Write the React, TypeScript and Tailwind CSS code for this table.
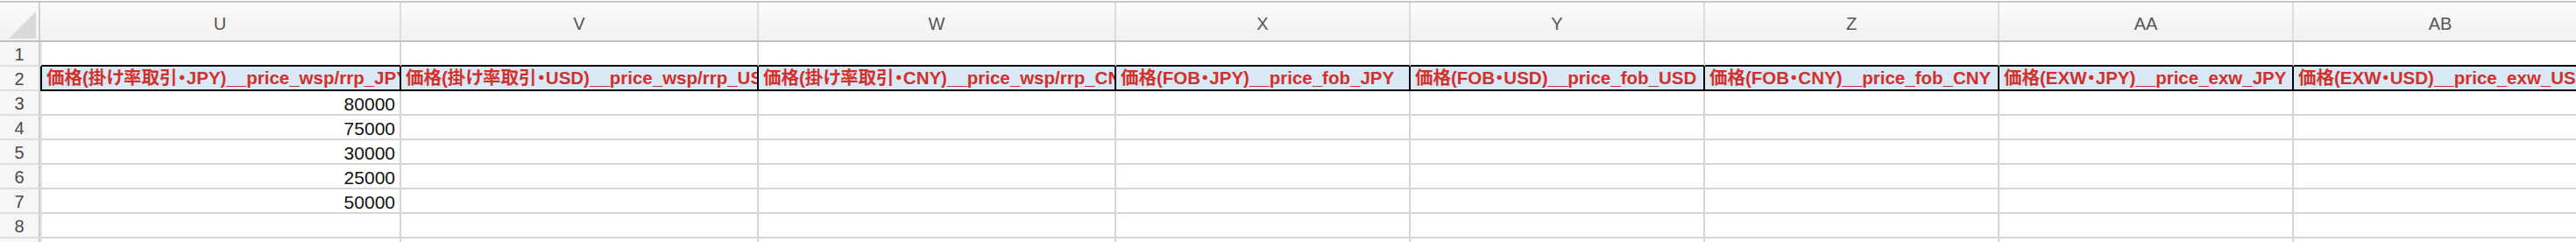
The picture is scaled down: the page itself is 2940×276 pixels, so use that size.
const font = "font-['Liberation_Sans','Noto_Sans_CJK_JP',sans-serif]"

const columns = [
    { key: "U", width: "w-[412px]", title: "価格(掛け率取引・JPY)__price_wsp/rrp_JPY" },
    { key: "V", width: "w-[408px]", title: "価格(掛け率取引・USD)__price_wsp/rrp_USD" },
    { key: "W", width: "w-[408px]", title: "価格(掛け率取引・CNY)__price_wsp/rrp_CNY" },
    { key: "X", width: "w-[336px]", title: "価格(FOB・JPY)__price_fob_JPY" },
    { key: "Y", width: "w-[336px]", title: "価格(FOB・USD)__price_fob_USD" },
    { key: "Z", width: "w-[336px]", title: "価格(FOB・CNY)__price_fob_CNY" },
    { key: "AA", width: "w-[336px]", title: "価格(EXW・JPY)__price_exw_JPY" },
    { key: "AB", width: "w-[336px]", title: "価格(EXW・USD)__price_exw_USD" },
]

const prices: Record<number, string> = { 3: "80000", 4: "75000", 5: "30000", 6: "25000", 7: "50000" }

const rows = [1, 2, 3, 4, 5, 6, 7, 8, 9]

function RowHeader({ n }: { n: number }) {
    return (
        <div className="flex h-full w-[46px] shrink-0 items-center justify-center border-r-2 border-b-2 border-r-[#cfcfcf] border-b-[#dedede] bg-[#f6f6f6] pt-[2px] text-[20px] leading-none text-[#4a4a4a]">
            {n}
        </div>
    )
}

export default function App() {
    return (
        <div className={`h-[276px] w-[2940px] overflow-hidden bg-white pt-px ${font}`}>
            {/* column letters */}
            <div className="flex h-[47px] border-y-2 border-t-[#c6c6c6] border-b-[#c2c2c2] bg-gradient-to-b from-[#fbfbfb] to-[#f1f1f1]">
                <div className="relative w-[46px] shrink-0 border-r-2 border-[#cfcfcf]">
                    <svg className="absolute left-[10px] top-[10px]" width="31" height="31" viewBox="0 0 31 31">
                        <path d="M31 0 L31 31 L0 31 Z" fill="#dadada" />
                    </svg>
                </div>
                {columns.map(col => (
                    <div
                        key={col.key}
                        className={`${col.width} flex shrink-0 items-center justify-center border-r-2 border-[#dddddd] pt-[4px] text-[20px] leading-none text-[#565656]`}>
                        {col.key}
                    </div>
                ))}
            </div>

            {rows.map(n => (
                <div key={n} className="flex h-[28px]">
                    <RowHeader n={n} />
                    {columns.map((col, i) => {
                        const isTitle = n === 2
                        const aboveTitle = n === 1
                        return (
                            <div
                                key={col.key}
                                className={`${col.width} flex shrink-0 items-center overflow-hidden whitespace-nowrap border-r-2 border-b-2 ${
                                    i === 0 ? "border-l-2" : ""
                                } ${
                                    isTitle
                                        ? "border-black bg-[#dbe8f6] pl-[5px] text-[20.5px] leading-[24px] font-bold text-[#d3302a]"
                                        : aboveTitle
                                          ? "border-r-[#d6d6d6] border-l-[#e4e4e4] border-b-black"
                                          : "border-r-[#d6d6d6] border-l-[#e4e4e4] border-b-[#d6d6d6]"
                                }`}>
                                {isTitle && <span className="[font-feature-settings:'palt']">{col.title}</span>}
                                {i === 0 && prices[n] && (
                                    <span className="ml-auto pr-[5px] pt-[3px] text-[21px] leading-none text-[#111111]">
                                        {prices[n]}
                                    </span>
                                )}
                            </div>
                        )
                    })}
                </div>
            ))}
        </div>
    )
}
